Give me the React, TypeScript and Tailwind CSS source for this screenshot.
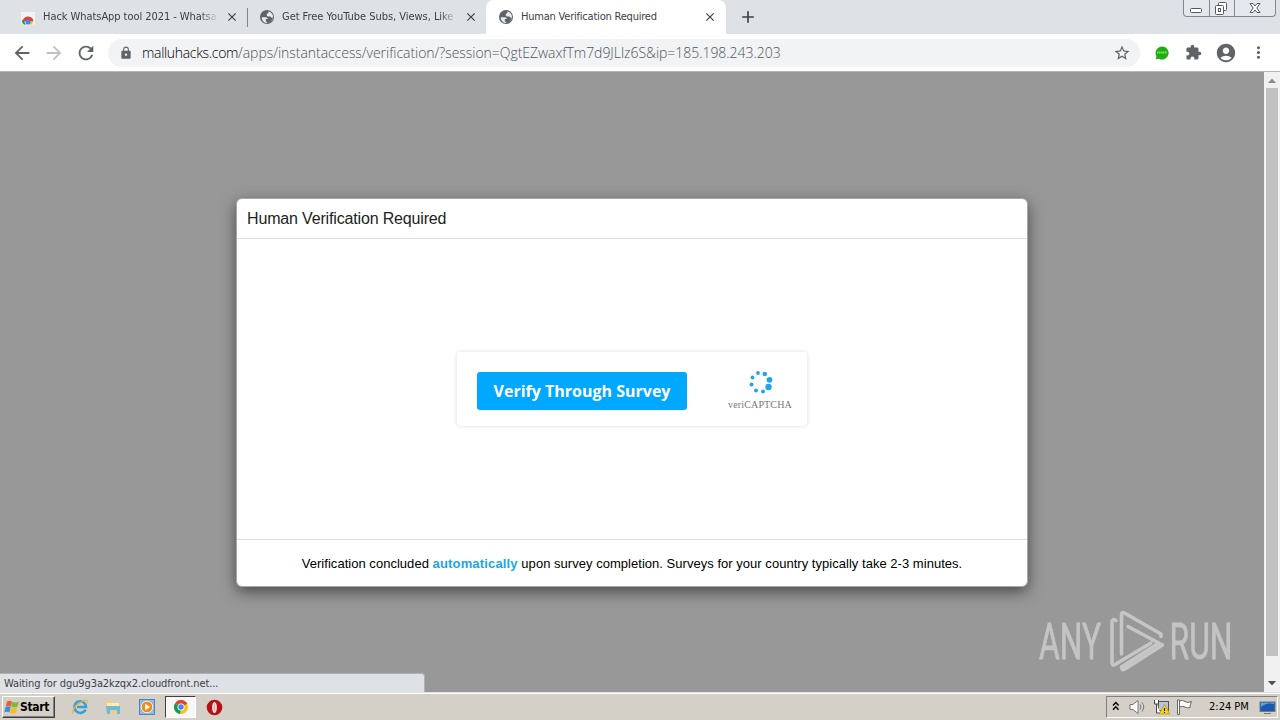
import React from 'react';
import {
    MdAccountCircle, MdAdd, MdArrowBack, MdArrowForward, MdClose,
    MdExtension, MdLock, MdMoreVert, MdRefresh, MdStarBorder,
} from 'react-icons/md';

const WebStoreIcon = () => (
    <svg className="w-4 h-4 shrink-0" viewBox="0 0 16 16">
        <path d="M1 3h14v11a1.5 1.5 0 0 1-1.500 1.500h-11A1.500 1.500 0 0 1 1 14z" fill="#f3f3f4" />
        <path d="M2.500 13a5.500 5.500 0 0 1 5-5.500h1A5.500 5.500 0 0 1 13.500 12H8z" fill="#db4437" />
        <path d="M2.500 10.500 6 15.500H4a4 4 0 0 1-1.500-5z" fill="#0f9d58" />
        <path d="M10 12h3.500l-1.500 3.500H8.500z" fill="#fbc116" />
        <circle cx="8" cy="13" r="2.500" fill="#4285f4" />
    </svg>
);

const GlobeIcon = () => (
    <svg className="w-4 h-4 shrink-0" viewBox="0 0 16 16">
        <circle cx="8" cy="8" r="7" fill="#5f6368" />
        <path d="M2.600 8.300h4.200q2 .2 2 1.700h-2v2.700h1.400v1.400q-4.800 0-5.600-5.800zM9.500 2.300v1.200q-.3 1.300-1.700 1.300v1.600q.2 1 2.200 1h1.500q.8 1.800 2.200 1.200-.5 3.300-2.700 4.700 3-2 3-5.300 0-4-4.500-5.700z" fill="#e9ebee" />
    </svg>
);

const ChromeIcon = () => (
    <svg className="w-4 h-4" viewBox="0 0 16 16">
        <circle cx="8" cy="8" r="7" fill="#fbc116" />
        <path d="M8 8 2 4.400A7 7 0 0 1 14.200 4.800z" fill="#db4437" />
        <path d="M8 8 2 4.400A7 7 0 0 0 7 15z" fill="#0f9d58" />
        <circle cx="8" cy="8" r="3.500" fill="#fff" />
        <circle cx="8" cy="8" r="2.700" fill="#4285f4" />
    </svg>
);

const WindowButtons = () => (
    <div className="flex h-[17px] w-[93px] border border-t-0 border-[#83878f] rounded-b-[4px] mr-1 bg-[#e4e7ec]">
        <svg width="91" height="16" viewBox="0 0 91 16" fill="#fff" stroke="#555a62">
            <path d="M25.500 0V16M50.500 0V16" stroke="#83878f" />
            <rect x="6.500" y="8.500" width="11" height="4" rx="1" />
            <rect x="34.500" y="2.500" width="8" height="8" rx="1" />
            <rect x="31.500" y="5.500" width="8" height="9" rx="1" />
            <rect x="34.500" y="8.500" width="2" height="3" />
            <path d="M66 3.500h3l2 2.500 2-2.500h3L72.800 8l3.200 4.500h-3L71 10l-2 2.500h-3L69.200 8z" />
        </svg>
    </div>
);

const Spinner = () => (
    <svg width="26" height="24" viewBox="0 0 26 24" fill="#1fa5e8">
        <circle cx="11" cy="3" r="1.900" />
        <circle cx="17.800" cy="4" r="2.300" />
        <circle cx="22.500" cy="9.800" r="2.900" />
        <circle cx="21.500" cy="17" r="3.200" />
        <circle cx="16" cy="21.500" r="2" />
        <circle cx="9" cy="20.500" r="2" />
        <circle cx="4.500" cy="14.500" r="2" />
        <circle cx="5.500" cy="7.500" r="1.900" />
    </svg>
);

const Watermark = () => (
    <svg className="absolute left-[1034px] top-[534px] opacity-80" width="204" height="70" viewBox="0 0 204 70">
        <g fill="#d0d0d0" stroke="#d0d0d0" strokeWidth=".8" fontFamily="Roboto" fontWeight="400" fontSize="50.500">
            <text x="5" y="53" textLength="62" lengthAdjust="spacingAndGlyphs">ANY</text>
            <text x="135.500" y="53" textLength="63" lengthAdjust="spacingAndGlyphs">RUN</text>
        </g>
        <g fill="none" stroke="#d2d2d2" strokeWidth="3.500" strokeLinecap="round" strokeLinejoin="round">
            <path d="M87.500 48V9q0-3.500 3-2L127 28v2.500" />
            <path d="M82 14.500q-4-2.500-4 1.500V56.500q0 3.500 3 2l36-21.500" />
            <path d="M94 20.500l34.500 18.500L91 63q-4 2-3.500-2L124 37.500" />
        </g>
    </svg>
);

const Scrollbar = () => (
    <div className="w-4 shrink-0 bg-[#f1f1f1] flex flex-col items-center">
        <svg width="16" height="16" viewBox="0 0 16 16"><path d="M4 11h8L8 6.500z" fill="#8b8b8b" /></svg>
        <div className="w-3 flex-1 bg-[#c1c1c1]" />
        <div className="h-5" />
        <svg width="16" height="16" viewBox="0 0 16 16"><path d="M4 5h8L8 9.500z" fill="#505050" /></svg>
    </div>
);

const TabStrip = () => (
    <div className="h-[34px] shrink-0 bg-[#dee1e6] flex justify-between text-[11px] tracking-[-0.210px] text-[#3c4043]">
        <div className="flex items-center h-full whitespace-nowrap">
            <div className="w-[248px] h-full pl-5 flex items-center relative">
                <WebStoreIcon />
                <span className="ml-[7px] pt-px w-[175px] overflow-hidden tracking-[-0.060px] [mask-image:linear-gradient(to_right,#000_90%,transparent)]">Hack WhatsApp tool 2021 - Whatsap</span>
                <MdClose className="ml-[7px]" size={14} stroke="currentColor" />
                <div className="absolute right-0 top-2 w-px h-[19px] bg-[#80868b]" />
            </div>
            <div className="w-[238px] h-full pl-[11px] flex items-center">
                <GlobeIcon />
                <span className="ml-[7px] pt-px w-[175px] overflow-hidden tracking-[-0.040px] [mask-image:linear-gradient(to_right,#000_90%,transparent)]">Get Free YouTube Subs, Views, Like</span>
                <MdClose className="ml-[7px]" size={14} stroke="currentColor" />
            </div>
            <div className="w-[240px] h-full pl-3 flex items-center bg-white rounded-t-[8px]">
                <GlobeIcon />
                <span className="ml-[7px] pt-px w-[175px]">Human Verification Required</span>
                <MdClose className="ml-[7px]" size={14} stroke="currentColor" />
            </div>
            <MdAdd className="ml-[12px]" size={20} />
        </div>
        <WindowButtons />
    </div>
);

const Toolbar = () => (
    <div className="h-[38px] shrink-0 bg-white border-b border-[#b5b5b5] flex items-center text-[#5f6368]">
        <MdArrowBack className="ml-[11px]" size={22} />
        <MdArrowForward className="ml-[10px] text-[#bfc1c3]" size={22} />
        <MdRefresh className="ml-[10px]" size={22} />
        <div className="ml-[11px] w-[1032px] h-7 rounded-full bg-[#f1f3f4] flex items-center pl-[11px] pr-[9px]">
            <MdLock size={14} />
            <div className="ml-[9px] -mt-px flex-1 flex text-[14px] font-light font-['Open_Sans'] whitespace-nowrap">
                <span className="w-[96px] tracking-[-0.320px] text-black">malluhacks.com</span>
                <span className="tracking-[-0.040px] text-[#50545a]">/apps/instantaccess/verification/?session=QgtEZwaxfTm7d9JLlz6S&amp;ip=185.198.243.203</span>
            </div>
            <MdStarBorder size={18} />
        </div>
        <svg className="ml-[15px]" width="14" height="14" viewBox="0 0 14 14">
            <path d="M7 .5a6.500 6.500 0 1 1-3 12.200L.8 13.200l.6-3A6.500 6.500 0 0 1 7 .5z" fill="#1fae10" />
            <path d="M2 6.500h10" stroke="#83d37a" strokeWidth="2" strokeDasharray="1.500 .4" />
        </svg>
        <MdExtension className="ml-[16px]" size={17} />
        <MdAccountCircle className="ml-[13px]" size={22} />
        <MdMoreVert className="ml-[12px]" size={19} />
    </div>
);

const VerificationDialog = () => (
    <div className="w-[792px] h-[389px] bg-white border border-[#a8a8a8] rounded-[6px] flex flex-col shadow-[0_5px_15px_rgba(0,0,0,0.5)] font-['Liberation_Sans'] text-black">
        <div className="h-10 shrink-0 border-b border-[#e0e0e0] pl-[10px] flex items-center text-[16px] text-[#222]">
            <span className="tracking-[-0.160px]">Human Verification Required</span>
        </div>
        <div className="flex-1 flex items-start justify-center pt-[113px]">
            <div className="w-[350px] h-[74px] rounded-[3px] shadow-[0_0_4px_rgba(0,0,0,0.14)] flex items-start pt-[20px] pl-5 pr-[15px] justify-between">
                <button className="w-[210px] h-[38px] rounded-[3px] bg-[#00a8ff] text-white font-bold text-[16px] font-['Open_Sans'] whitespace-nowrap">Verify Through Survey</button>
                <div className="w-16 -mt-[2px] flex flex-col items-center">
                    <Spinner />
                    <span className="mt-[5px] text-[10px] leading-[12px] tracking-[0.150px] text-[#777] font-['Liberation_Serif'] whitespace-nowrap">veriCAPTCHA</span>
                </div>
            </div>
        </div>
        <div className="h-[47px] shrink-0 border-t border-[#ddd] flex items-center justify-center pt-[2px] text-[13px] whitespace-nowrap">
            <p className="tracking-[0.030px]">
                Verification concluded <b className="text-[#1ba5e8] tracking-[0.160px]">automatically</b> upon survey completion. Surveys for your country typically take 2-3 minutes.
            </p>
        </div>
    </div>
);

const StartButton = () => (
    <div className="w-[53px] h-[22px] bg-[#d4d0c8] border border-t-white border-l-white border-r-[#404040] border-b-[#404040] shadow-[inset_-1px_-1px_0_#808080] flex items-center pl-px">
        <svg width="16" height="16" viewBox="0 0 16 16">
            <path d="M3 2.500q2.500-1.500 5 0L6.800 7.500q-2.500-1.500-5 0z" fill="#e9602b" />
            <path d="M8.300 2.800q2.500 1.500 6.500 0l-1.300 5q-3 1.500-6.200 0z" fill="#7cb83e" />
            <path d="M1.500 8q2.500-1.500 5.200 0L5.300 13.500q-2.500-1.500-5 0z" fill="#3b8ede" />
            <path d="M7.200 8.300q2.800 1.500 6 0L12 13.800q-3 1.500-6.200 0z" fill="#f9bd20" />
        </svg>
        <span className="text-[12px] font-bold text-black tracking-[-0.300px]">Start</span>
    </div>
);

const QuickLaunch = () => (
    <div className="flex items-center">
        <svg className="ml-[16px]" width="18" height="18" viewBox="0 0 18 18" fill="none">
            <path d="M14.500 11.500A5.800 5.800 0 1 1 15 9H6" stroke="#3a9fdb" strokeWidth="2.600" />
            <path d="M2 15.500C-.5 13 6 5 13 2.500c3-1 4 .3 3 2.500" stroke="#e9b93d" strokeWidth="1.300" />
        </svg>
        <svg className="ml-[15px]" width="18" height="18" viewBox="0 0 18 18">
            <path d="M2 3h5l1 2h8v10H2z" fill="#f1d06d" />
            <path d="M3 5h12v4H3z" fill="#fbeeb4" />
            <path d="M2 8h14v8h-3v-4H6v4H3z" fill="#70b9dc" />
        </svg>
        <svg className="ml-[16px]" width="18" height="18" viewBox="0 0 18 18">
            <rect x="1.500" y="1.500" width="15" height="15" fill="#8bbbe6" stroke="#5284b5" />
            <circle cx="9" cy="9" r="5.800" fill="#f38a1c" stroke="#fff" strokeWidth=".8" />
            <path d="M7.200 5.800v6.400L12 9z" fill="#fff" />
        </svg>
        <div className="ml-[9px] w-[31px] h-[22px] border border-[#404040] border-r-white border-b-white bg-[#f8f7f5] flex items-center justify-center">
            <ChromeIcon />
        </div>
        <svg className="ml-[10px]" width="17" height="17" viewBox="0 0 17 17">
            <circle cx="8.500" cy="8.500" r="7.800" fill="#b31217" />
            <ellipse cx="8.500" cy="8.500" rx="2.300" ry="5.500" fill="#fff" />
            <ellipse cx="8.500" cy="8.500" rx="1" ry="4.500" fill="#d9adad" />
        </svg>
    </div>
);

const Tray = () => (
    <div className="w-[172px] h-[22px] mr-[2px] border border-[#808080] border-r-white border-b-white flex items-center text-[11px] text-black">
        <svg className="ml-[5px] -mt-[2px]" width="8" height="10" viewBox="0 0 8 10" fill="none" stroke="#000" strokeWidth="1.400">
            <path d="M1 4.500l2.800-3 2.800 3M1 8.800l2.800-3 2.800 3" />
        </svg>
        <svg className="ml-[9px]" width="17" height="16" viewBox="0 0 17 16" fill="none" stroke="#777">
            <path d="M1 5.500h3l5-4v13l-5-4H1z" fill="#fff" />
            <path d="M11 5.500q2 2.500 0 5M13 3.500q3.500 4.500 0 9" />
        </svg>
        <svg className="ml-[7px]" width="17" height="16" viewBox="0 0 17 16">
            <rect x="5.500" y="2.500" width="10" height="9" fill="#b8c4dc" stroke="#555" />
            <path d="M1.500 1v4h4V1M3.500 5v9h4" fill="#fff" stroke="#444" />
            <path d="M11.500 5.500 17 15H6z" fill="#f6d31f" stroke="#b59100" strokeWidth=".7" />
            <path d="M11.500 9v3M11.500 13v1" stroke="#222" strokeWidth="1.200" />
        </svg>
        <svg className="ml-[6px]" width="17" height="16" viewBox="0 0 17 16" fill="#fff" stroke="#666">
            <path d="M1.500 1v14.500h2V1zM3.500 2q3-1.500 5.500.5t6.500 0q-1.500 3-1.500 6-3 1-5-.5t-5.500 0z" />
        </svg>
        <span className="ml-[16px] w-[42px] pt-px whitespace-nowrap">2:24 PM</span>
        <svg className="ml-[8px]" width="17" height="16" viewBox="0 0 17 16">
            <rect x="1" y="3" width="15" height="9.500" fill="#1c57b0" stroke="#6c7888" />
            <path d="M2 8q5-5 13-3V3.800H2z" fill="#58a6ea" />
            <path d="M5 14.500h7" stroke="#777" />
        </svg>
    </div>
);

export default function App() {
    return (
        <div className="w-[1280px] h-[720px] overflow-hidden flex flex-col font-['DejaVu_Sans_Condensed','Noto_Sans',sans-serif]">
            <TabStrip />
            <Toolbar />
            <div className="flex-1 min-h-0 flex relative">
                <div className="flex-1 bg-[#989898] flex items-start justify-center pt-[126px]">
                    <VerificationDialog />
                </div>
                <Scrollbar />
                <Watermark />
                <div className="absolute left-0 bottom-0 w-[425px] h-[19px] bg-[#dee1e6] border-t border-r border-[#aeb1b6] rounded-tr-[3px] pl-1 pt-[2px] flex items-center text-[11px] tracking-[-0.100px] text-[#3c4043]">
                    Waiting for dgu9g3a2kzqx2.cloudfront.net...
                </div>
            </div>
            <div className="h-7 shrink-0 bg-[#d4d0c8] border-t border-[#e4e1da] shadow-[inset_0_1px_0_#fff] flex items-center justify-between pt-[1px]">
                <div className="flex items-center pl-[2px]">
                    <StartButton />
                    <QuickLaunch />
                </div>
                <Tray />
            </div>
        </div>
    );
}
